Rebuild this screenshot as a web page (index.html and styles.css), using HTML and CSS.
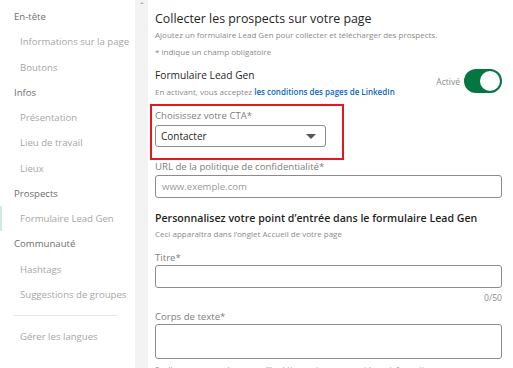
FILE: index.html
```html
<!DOCTYPE html>
<html lang="fr">
<head>
    <meta charset="UTF-8">
    <title>Formulaire Lead Gen</title>
    <link rel="stylesheet" href="styles.css">
</head>
<body>
    <div class="page">
        <aside class="sidebar">
            <div class="nav-group">En-tête</div>
            <div class="nav-item">Informations sur la page</div>
            <div class="nav-item">Boutons</div>
            <div class="nav-group">Infos</div>
            <div class="nav-item">Présentation</div>
            <div class="nav-item">Lieu de travail</div>
            <div class="nav-item">Lieux</div>
            <div class="nav-group">Prospects</div>
            <div class="nav-item active">Formulaire Lead Gen</div>
            <div class="nav-group">Communauté</div>
            <div class="nav-item">Hashtags</div>
            <div class="nav-item">Suggestions de groupes</div>
            <hr class="nav-divider">
            <div class="nav-item">Gérer les langues</div>
        </aside>
        <div class="scroll-track"><span class="scroll-arrow"></span></div>
        <main class="content">
            <h1>Collecter les prospects sur votre page</h1>
            <p class="hint">Ajoutez un formulaire Lead Gen pour collecter et télécharger des prospects.</p>
            <p class="hint required">* indique un champ obligatoire</p>

            <div class="toggle-row">
                <div>
                    <div class="toggle-title">Formulaire Lead Gen</div>
                    <p class="hint terms">En activant, vous acceptez <a href="#">les conditions des pages de LinkedIn</a></p>
                </div>
                <div class="toggle-state">
                    <span>Activé</span>
                    <span class="switch"><span class="knob"></span></span>
                </div>
            </div>

            <div class="highlight">
                <label class="field-label">Choisissez votre CTA*</label>
                <div class="select">
                    <span>Contacter</span>
                    <span class="caret"></span>
                </div>
            </div>

            <label class="field-label url-label">URL de la politique de confidentialité*</label>
            <div class="input placeholder">www.exemple.com</div>

            <h2>Personnalisez votre point d’entrée dans le formulaire Lead Gen</h2>
            <p class="hint">Ceci apparaîtra dans l’onglet Accueil de votre page</p>

            <label class="field-label title-label">Titre*</label>
            <div class="input"></div>
            <div class="counter">0/50</div>

            <label class="field-label body-label">Corps de texte*</label>
            <div class="textarea"></div>
            <p class="hint cut">Expliquez aux membres ce qu’ils obtiennent en envoyant leurs informations</p>
        </main>
    </div>
</body>
</html>
```

FILE: styles.css
```css
:root {
    --text-dark: #1f1f1f;
    --text-muted: #8a8a8a;
    --nav-group: #6e6e6e;
    --nav-item: #a6a6a6;
    --border: #8c8c8c;
    --link: #0a66c2;
    --green: #057642;
}

body {
    margin: 0;
    background: #ffffff;
    font-family: "Open Sans", "Noto Sans", sans-serif;
    color: var(--text-dark);
    overflow: hidden;
}

.page {
    display: flex;
    height: 368px;
    overflow: hidden;
}

.sidebar {
    width: 135px;
    flex-shrink: 0;
    padding-top: 4px;
    font-size: 9.6px;
}

.nav-group,
.nav-item {
    height: 25.25px;
    line-height: 25px;
    white-space: nowrap;
}

.nav-group {
    padding-left: 14px;
    color: var(--nav-group);
}

.nav-item {
    padding-left: 20px;
    color: var(--nav-item);
}

.nav-item.active {
    box-shadow: inset 2px 0 0 #d3ebe6;
}

.nav-divider {
    margin: 8px 17px 8px 14px;
    border: none;
    border-top: 1px solid #e6e6e6;
}

.scroll-track {
    width: 13px;
    flex-shrink: 0;
    background: #f3f3f3;
    position: relative;
}

.scroll-arrow {
    position: absolute;
    top: 2px;
    left: 5px;
    border-left: 2px solid transparent;
    border-right: 2px solid transparent;
    border-bottom: 2px solid #b5b5b5;
}

.content {
    flex: 1;
    padding: 10px 11px 0 7px;
}

h1 {
    margin: 0;
    font-size: 12.4px;
    line-height: 18px;
    font-weight: 400;
}

h2 {
    margin: 11px 0 0;
    font-size: 10.6px;
    line-height: 18px;
    font-weight: 600;
    white-space: nowrap;
}

.hint {
    margin: 0;
    font-size: 8px;
    line-height: 14px;
    color: var(--text-muted);
    white-space: nowrap;
}

.hint.required {
    margin-top: 3px;
}

.toggle-row {
    display: flex;
    justify-content: space-between;
    align-items: center;
    margin-top: 8px;
}

.toggle-title {
    font-size: 10.2px;
    line-height: 16px;
}

.hint.terms {
    margin-top: 2px;
}

.hint.terms a {
    color: var(--link);
    font-weight: 600;
    text-decoration: none;
}

.toggle-state {
    display: flex;
    align-items: center;
    gap: 4px;
    font-size: 8.5px;
    color: var(--text-muted);
    margin-top: -4px;
}

.switch {
    width: 38px;
    height: 24px;
    border-radius: 12px;
    background: var(--green);
    display: flex;
    justify-content: flex-end;
    align-items: center;
    padding-right: 2px;
    box-sizing: border-box;
}

.knob {
    width: 20px;
    height: 20px;
    border-radius: 50%;
    background: #ffffff;
}

.highlight {
    width: 194px;
    box-sizing: border-box;
    margin: 5px 0 0 -5px;
    padding: 3px 16px 11px 3px;
    border: 2px solid #e8141e;
}

.field-label {
    display: block;
    font-size: 9.6px;
    line-height: 14px;
    color: #7e7e7e;
    white-space: nowrap;
}

.select {
    margin-top: 2px;
    height: 22px;
    box-sizing: border-box;
    border: 1px solid var(--border);
    border-radius: 3px;
    display: flex;
    align-items: center;
    justify-content: space-between;
    padding: 0 9px 0 5px;
    font-size: 10px;
}

.caret {
    border-left: 5px solid transparent;
    border-right: 5px solid transparent;
    border-top: 5px solid #555555;
}

.url-label {
    line-height: 12px;
    margin-top: 1px;
}

.input {
    margin-top: 2px;
    height: 23px;
    box-sizing: border-box;
    border: 1px solid var(--border);
    border-radius: 3px;
    padding: 0 6px;
    font-size: 9.6px;
    line-height: 21px;
}

.placeholder {
    color: #9a9a9a;
}

.title-label {
    margin-top: 11px;
    line-height: 12px;
}

.title-label + .input {
    margin-top: 1px;
}

.counter {
    margin-top: 3px;
    text-align: right;
    font-size: 8.6px;
    line-height: 14px;
    color: var(--text-muted);
}

.body-label {
    margin-top: 6px;
    line-height: 12px;
}

.textarea {
    margin-top: 1px;
    height: 35px;
    box-sizing: border-box;
    border: 1px solid var(--border);
    border-radius: 3px;
}

.hint.cut {
    margin-top: 3px;
}
```
